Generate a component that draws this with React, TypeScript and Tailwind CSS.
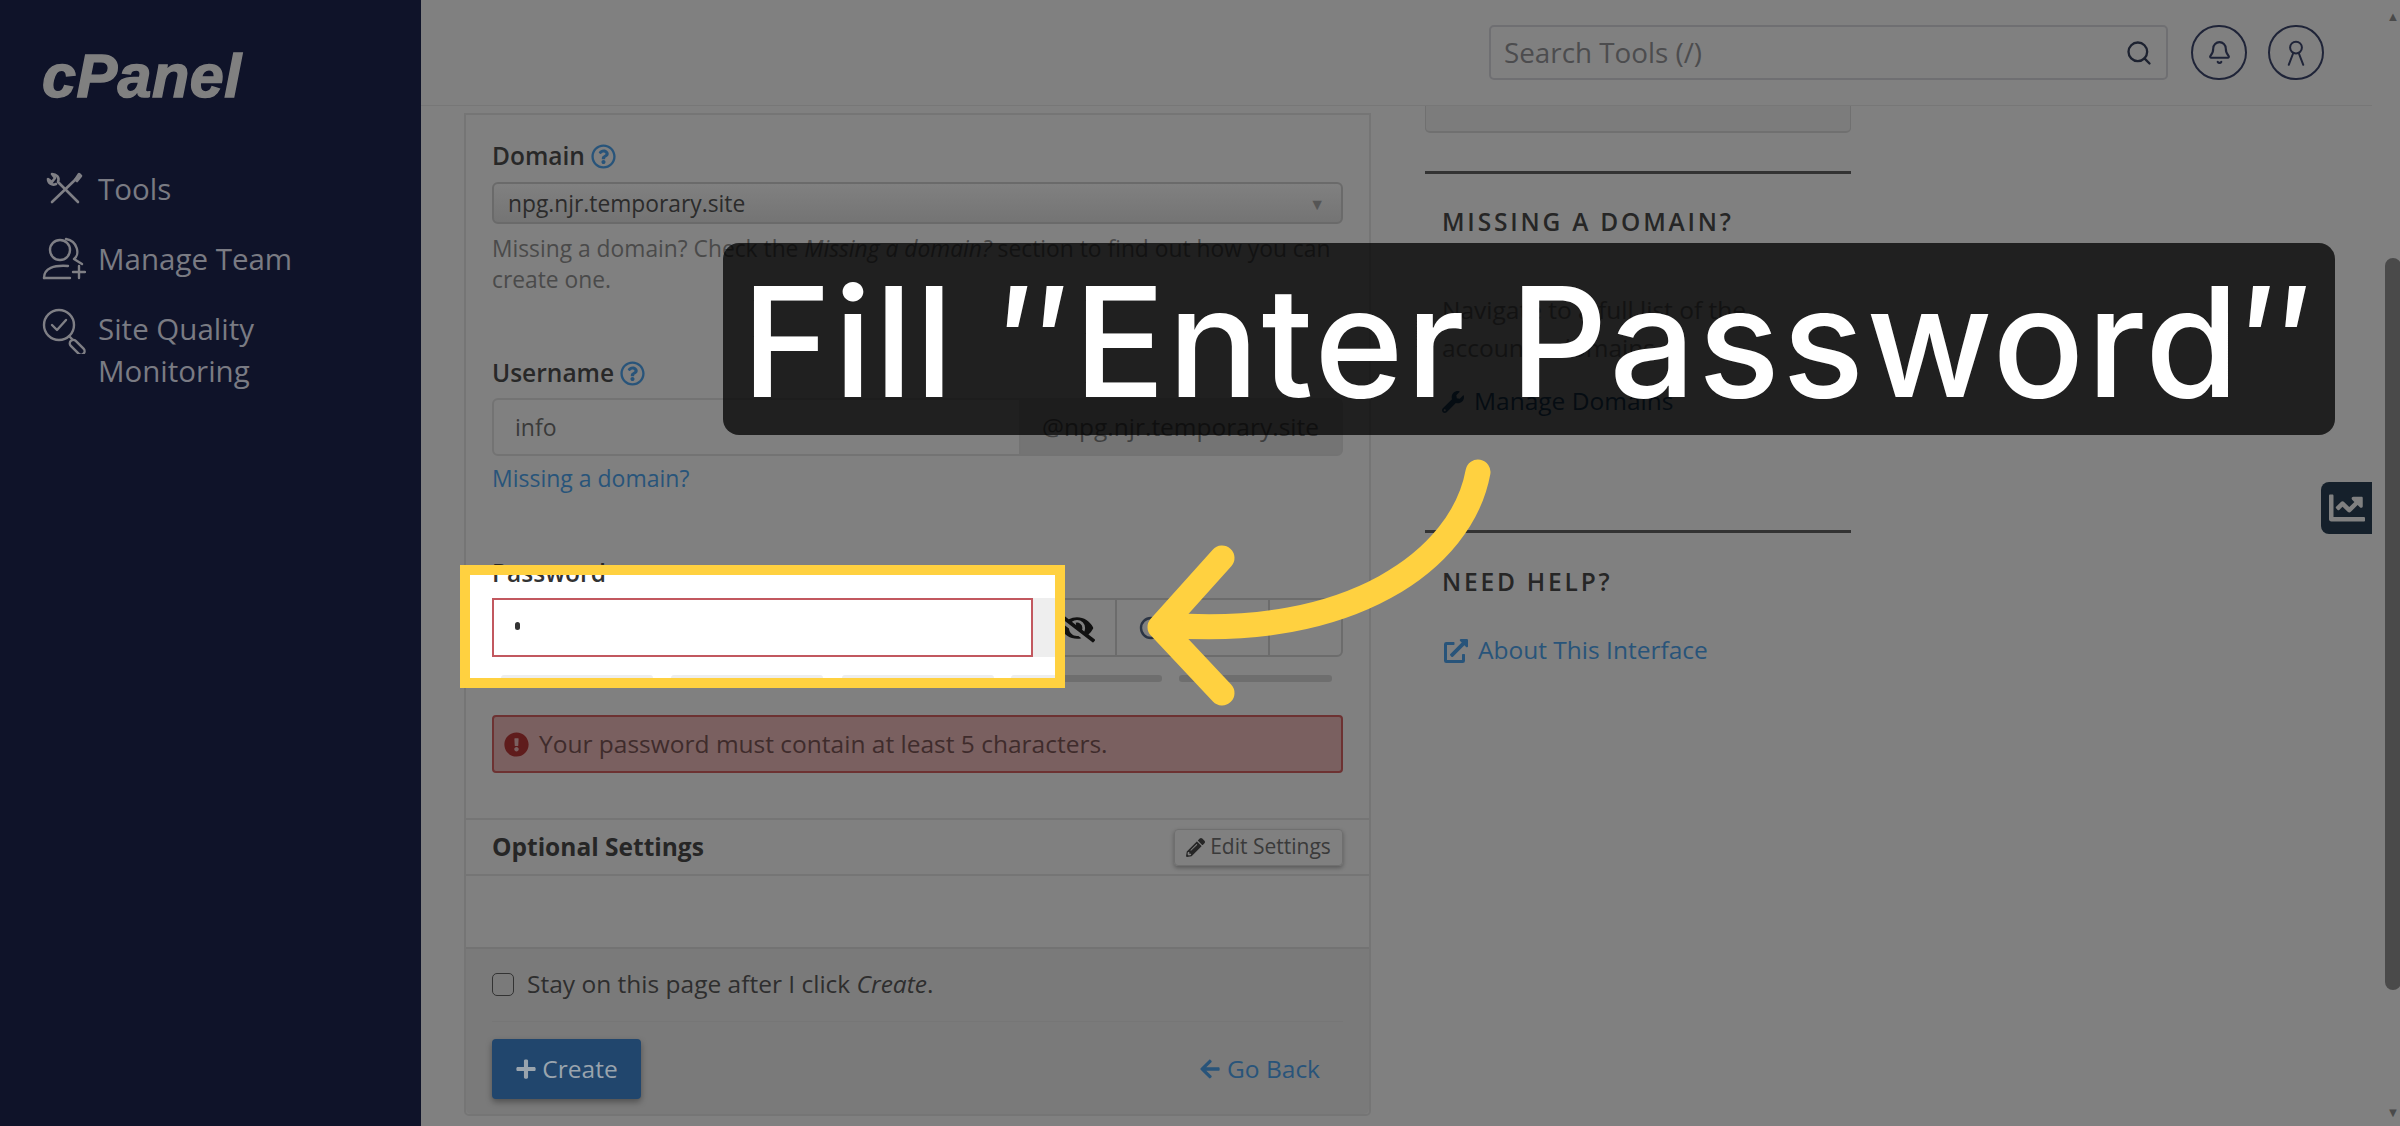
import React from 'react';
import { Bell, Search } from 'lucide-react';
import {
  FaArrowLeft,
  FaChartLine,
  FaExclamationCircle,
  FaExternalLinkAlt,
  FaEyeSlash,
  FaPencilAlt,
  FaPlus,
  FaRegQuestionCircle,
  FaWrench,
} from 'react-icons/fa';

const ToolsIcon = () => (
  <svg width="44" height="36" viewBox="0 0 44 36" fill="none" stroke="#7f7f85" strokeWidth="2.6" strokeLinecap="round" strokeLinejoin="round">
    <path d="M10 31 L34 8" />
    <path d="M33 9 L37 3 L39 5 L35 10" />
    <path d="M36 31 L16 11 C18 6 14 3 10 3 L13 7 L10 11 L6 8 C6 12 10 15 14 13" />
  </svg>
);

const TeamIcon = () => (
  <svg width="44" height="44" viewBox="0 0 44 44" fill="none" stroke="#7f7f85" strokeWidth="2.4" strokeLinecap="round" strokeLinejoin="round">
    <circle cx="18" cy="13" r="10" />
    <path d="M24 2 C36 4 38 18 32 22 L40 27" />
    <path d="M2 41 C2 31 12 28 26 29" />
    <path d="M2 41 H28" />
    <path d="M37 29 V41 M31 35 H43" />
  </svg>
);

const QualityIcon = () => (
  <svg width="46" height="46" viewBox="0 0 46 46" fill="none" stroke="#7f7f85" strokeWidth="2.4" strokeLinecap="round" strokeLinejoin="round">
    <circle cx="17" cy="17" r="15" />
    <path d="M10 17 L15 22 L24 12" />
    <path d="M27 28 L31 32" />
    <rect x="29" y="32" width="18" height="7" rx="3.5" transform="rotate(45 32 34)" />
  </svg>
);

const Helper = () => <FaRegQuestionCircle className="text-[25px] text-[#28547a]" />;

const App: React.FC = () => {
  return (
    <div className="relative flex h-[1126px] w-[2400px] overflow-hidden bg-[#808080] font-['Open_Sans',sans-serif] text-[24.5px] text-[#4a4a4a]">
      <aside className="w-[421px] shrink-0 bg-[#0f1329] pl-[42px] pt-[46px] text-[#7a7b83]">
        <div className="h-[60px] font-['Liberation_Sans',sans-serif] text-[61px] font-bold italic leading-[60px] tracking-[0.5px] text-[#808080] [-webkit-text-stroke:1.5px_#808080]">cPanel</div>
        <nav className="mt-[62px] flex flex-col text-[29.5px] leading-[42px]">
          <div className="flex items-center gap-[12px] h-[42px]">
            <ToolsIcon />
            <span>Tools</span>
          </div>
          <div className="mt-[28px] flex items-center gap-[12px] h-[42px]">
            <TeamIcon />
            <span>Manage Team</span>
          </div>
          <div className="mt-[28px] flex items-start gap-[10px]">
            <QualityIcon />
            <span className="w-[270px]">Site Quality Monitoring</span>
          </div>
        </nav>
      </aside>

      <div className="flex min-w-0 flex-1 flex-col">
        <header className="flex h-[106px] shrink-0 items-start border-b border-[#777777] pl-[1068px] pt-[25px]">
          <div className="flex h-[55px] w-[679px] items-center justify-between rounded-[5px] border-2 border-[#6f6f72] pl-[13px] pr-[13px] text-[27.8px] text-[#4c4c4e]">
            <span>Search Tools (/)</span>
            <Search size={28} strokeWidth={2} className="text-[#1d2230]" />
          </div>
          <div className="ml-[23px] flex h-[55px] w-[56px] items-center justify-center rounded-full border-2 border-[#1f2438] text-[#1f2438]">
            <Bell size={25} strokeWidth={2} />
          </div>
          <div className="ml-[21px] flex h-[55px] w-[56px] items-center justify-center rounded-full border-2 border-[#1f2438] text-[#1f2438]">
            <svg width="20" height="28" viewBox="0 0 22 30" fill="none" stroke="currentColor" strokeWidth="2.2" strokeLinecap="round">
              <circle cx="11" cy="9" r="6.5" />
              <path d="M3 28 L8 15 M19 28 L14 15" />
            </svg>
          </div>
        </header>

        <main className="flex min-h-0 flex-1 pl-[43px]">
          <section className="mt-[7px] h-[1003px] w-[907px] shrink-0 rounded-b-[5px] border-2 border-[#757575]">
            <div className="px-[26px] pt-[26px]">
              <div className="flex h-[30px] items-center gap-[6px] font-semibold text-[#282828]">
                Domain <Helper />
              </div>
              <div className="mt-[11px] flex h-[42px] items-center justify-between rounded-[6px] border-2 border-[#6a6a6a] bg-[linear-gradient(#808080,#747474)] pl-[14px] pr-[16px] pt-[2px] text-[22.8px] text-[#2b2b2b]">
                <span>npg.njr.temporary.site</span>
                <span className="text-[16px] text-[#555555]">▼</span>
              </div>
              <p className="mt-[9px] text-[22.8px] leading-[31px]">
                Missing a domain? Check the <em>Missing a domain?</em> section to find out how you can create one.
              </p>

              <div className="mt-[63px] flex h-[30px] items-center gap-[6px] font-semibold text-[#282828]">
                Username <Helper />
              </div>
              <div className="mt-[10px] flex h-[58px] items-center rounded-[6px] border-2 border-[#737373] text-[#3a3a3a]">
                <span className="flex-1 pl-[21px] text-[23px]">info</span>
                <span className="flex h-full w-[322px] items-center border-l-2 border-[#737373] bg-[#747474] pl-[21px] text-[#3f3f3f]">@npg.njr.temporary.site</span>
              </div>
              <div className="mt-[7px] flex h-[30px] items-center text-[23px] text-[#28547a]">Missing a domain?</div>

              <div className="mt-[65px] flex h-[30px] items-center font-semibold text-[#282828]">Password</div>
              <div className="mt-[10px] flex h-[59px] items-stretch rounded-[6px] border-2 border-[#6c6c6c] text-[#111111]">
                <span className="flex w-[623px] items-center justify-end border-r-2 border-[#6c6c6c] pr-[20px]">
                  <FaEyeSlash className="text-[36px]" />
                </span>
                <span className="flex w-[151px] items-center pl-[22px]">
                  <svg width="24" height="24" viewBox="0 0 24 24" fill="none" stroke="#2b3444" strokeWidth="2.4">
                    <circle cx="12" cy="12" r="10" />
                  </svg>
                </span>
                <span className="flex-1 border-l-2 border-[#6c6c6c]" />
              </div>
              <div className="mt-[18px] flex gap-[17px] pl-[9px] pr-[11px]">
                <span className="h-[7px] flex-1 rounded-[3px] bg-[#6e6e6e]" />
                <span className="h-[7px] flex-1 rounded-[3px] bg-[#6e6e6e]" />
                <span className="h-[7px] flex-1 rounded-[3px] bg-[#6e6e6e]" />
                <span className="h-[7px] flex-1 rounded-[3px] bg-[#6e6e6e]" />
                <span className="h-[7px] flex-1 rounded-[3px] bg-[#6e6e6e]" />
              </div>
              <div className="mt-[33px] flex h-[58px] items-center gap-[10px] rounded-[4px] border-2 border-[#6d3232] bg-[#7a6060] pl-[10px] text-[#3f2c2c]">
                <FaExclamationCircle className="text-[25px] text-[#5f1c1c]" />
                <span>Your password must contain at least 5 characters.</span>
              </div>
            </div>

            <div className="mt-[45px] flex h-[58px] items-center justify-between border-y-2 border-[#757575] px-[26px]">
              <span className="font-bold text-[#262626]">Optional Settings</span>
              <span className="flex h-[37px] w-[169px] items-center justify-center gap-[5px] rounded-[4px] border border-[#6f6f6f] text-[21px] text-[#3a3a3a] shadow-[0_2px_4px_rgba(0,0,0,0.3)]">
                <FaPencilAlt className="text-[19px] text-[#262626]" /> Edit Settings
              </span>
            </div>
            <div className="h-[71px]" />
            <div className="h-[167px] rounded-b-[5px] border-t-2 border-[#737373] bg-[#7a7a7a] px-[26px]">
              <div className="flex h-[73px] items-center gap-[13px] border-b border-[#767676] pb-[1px] text-[#2e2e2e]">
                <span className="h-[23px] w-[22px] rounded-[5px] border border-[#333333]" />
                <span>
                  Stay on this page after I click <em>Create</em>.
                </span>
              </div>
              <div className="mt-[17px] flex items-center justify-between">
                <span className="flex h-[60px] w-[149px] items-center justify-center gap-[5px] rounded-[4px] bg-[#21466d] text-[#9aa4ad] shadow-[0_3px_6px_rgba(0,0,0,0.35)]">
                  <FaPlus className="text-[22px]" /> Create
                </span>
                <span className="mr-[23px] flex items-center gap-[6px] text-[#28547a]">
                  <FaArrowLeft className="text-[22px]" /> Go Back
                </span>
              </div>
            </div>
          </section>

          <section className="ml-[54px] w-[426px] shrink-0">
            <div className="h-[27px] rounded-b-[5px] border-x border-b-2 border-[#707070] bg-[#7c7c7c]" />
            <div className="mt-[38px] h-[3px] bg-[#333333]" />
            <h3 className="mt-[31px] pl-[17px] text-[24.5px] font-semibold uppercase leading-[34px] tracking-[2.8px] text-[#262626]">Missing a Domain?</h3>
            <p className="mt-[52px] pl-[17px] leading-[38px]">Navigate to a full list of the account's domains.</p>
            <div className="mt-[16px] flex h-[37px] items-center gap-[10px] pl-[17px] text-[#16324a]">
              <FaWrench className="text-[22px]" /> Manage Domains
            </div>
            <div className="mt-[110px] h-[3px] bg-[#333333]" />
            <h3 className="mt-[32px] pl-[17px] text-[24.5px] font-semibold uppercase leading-[34px] tracking-[2.8px] text-[#262626]">Need Help?</h3>
            <div className="mt-[33px] flex h-[37px] items-center gap-[10px] pl-[19px] text-[#28547a]">
              <FaExternalLinkAlt className="text-[24px]" /> About This Interface
            </div>
          </section>
        </main>
      </div>

      <div className="flex w-[28px] shrink-0 flex-col items-center pl-[14px] text-[#4a4a4a]">
        <span className="mt-[8px] text-[13px] leading-[16px]">▲</span>
        <span className="mt-[234px] h-[732px] w-[16px] shrink-0 rounded-[8px] bg-[#4a4a4a]" />
        <span className="mt-[114px] text-[13px] leading-[16px]">▼</span>
      </div>

      {/* side tab */}
      <div className="absolute left-[2321px] top-[482px] flex h-[52px] w-[51px] items-center justify-center rounded-l-[8px] bg-[#15202b] text-[#808080]">
        <FaChartLine className="text-[36px]" />
      </div>

      {/* highlight */}
      <div className="absolute left-[460px] top-[565px] h-[123px] w-[605px] overflow-hidden border-[10px] border-[#ffd140] bg-white">
        <div className="absolute left-[22px] top-[-17px] flex h-[30px] items-center font-semibold text-[#333333]">Password</div>
        <div className="absolute left-[563px] top-[23px] h-[59px] w-[22px] bg-[#eeeeee]" />
        <div className="absolute left-[22px] top-[23px] flex h-[59px] w-[541px] items-center border-2 border-[#c2585f] pl-[21px]">
          <span className="mt-[-4px] h-[8px] w-[5px] rounded-full bg-[#333333]" />
        </div>
        <div className="absolute left-[31px] top-[100px] h-[7px] w-[152px] rounded-[3px] bg-[#eeeeee]" />
        <div className="absolute left-[201px] top-[100px] h-[7px] w-[152px] rounded-[3px] bg-[#eeeeee]" />
        <div className="absolute left-[372px] top-[100px] h-[7px] w-[152px] rounded-[3px] bg-[#eeeeee]" />
        <div className="absolute left-[541px] top-[100px] h-[7px] w-[60px] rounded-[3px] bg-[#eeeeee]" />
      </div>

      {/* caption */}
      <div className="absolute left-[723px] top-[243px] flex h-[192px] w-[1612px] items-center justify-center rounded-[16px] bg-black/75 pt-[5px] font-['Inter',sans-serif] text-[152px] font-medium leading-none tracking-[2.4px] text-white">
        Fill ″Enter Password″
      </div>

      {/* arrow */}
      <svg className="absolute left-0 top-0" width="2400" height="1126" fill="none" stroke="#ffd140" strokeWidth="25" strokeLinecap="round" strokeLinejoin="round">
        <path d="M1478 472 C1462 560 1350 640 1165 625" />
        <path d="M1222 558 L1160 627 L1222 693" />
      </svg>
    </div>
  );
};

export default App;
